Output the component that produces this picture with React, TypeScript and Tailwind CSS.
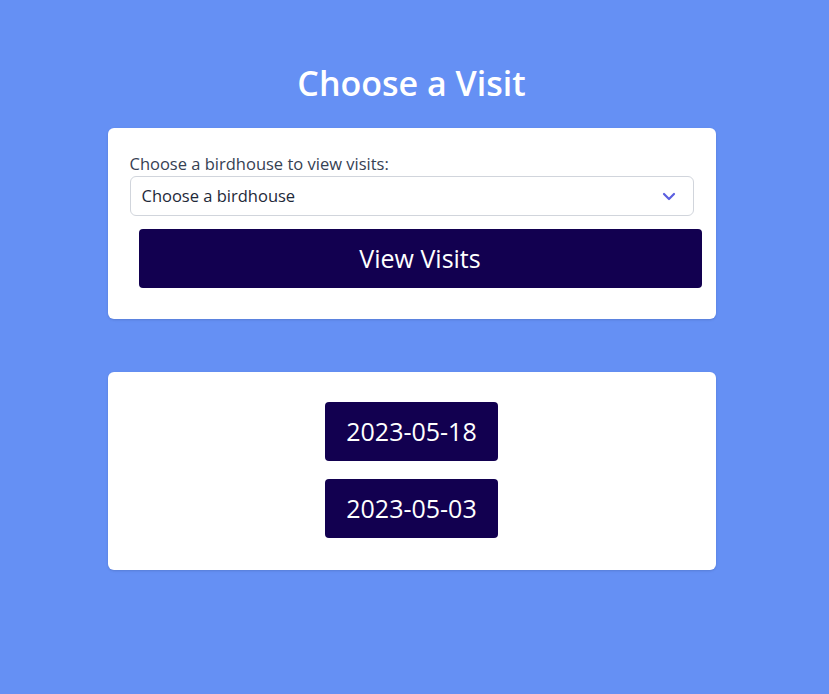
import React from 'react';

const VISITS = ['2023-05-18', '2023-05-03'];

export default function App() {
  return (
    <div className="min-h-screen bg-[#6590f4] flex flex-col items-center pt-[58px] pr-[6px] font-['Open_Sans',sans-serif]">
      <h1 className="text-[34px] leading-[50px] font-semibold text-white mb-[20px]">Choose a Visit</h1>

      <div className="w-[608px] bg-white rounded-md shadow pl-[22px] pr-[22px] pt-[24px] pb-[31px]">
        <label className="block text-[16.5px] leading-6 text-gray-700">Choose a birdhouse to view visits:</label>
        <div className="h-10 w-[564px] border border-gray-300 rounded-md flex items-center justify-between pl-[11px] pr-[16px]">
          <span className="text-[16.5px] text-gray-800">Choose a birdhouse</span>
          <svg width="16" height="16" viewBox="0 0 16 16" fill="none" stroke="#5b5fe0" strokeWidth="2.2" strokeLinecap="round" strokeLinejoin="round">
            <path d="M3 6l5 5 5-5" />
          </svg>
        </div>
        <button className="mt-[13px] ml-[9px] w-[563px] h-[59px] bg-[#120050] rounded text-white text-[25px]">
          View Visits
        </button>
      </div>

      <div className="mt-[53px] w-[608px] bg-white rounded-md shadow pt-[30px] pb-[32px] flex flex-col items-center gap-[18px]">
        {VISITS.map((d) => (
          <button key={d} className="w-[173px] h-[59px] bg-[#120050] rounded text-white text-[25px]">
            {d}
          </button>
        ))}
      </div>
    </div>
  );
}
